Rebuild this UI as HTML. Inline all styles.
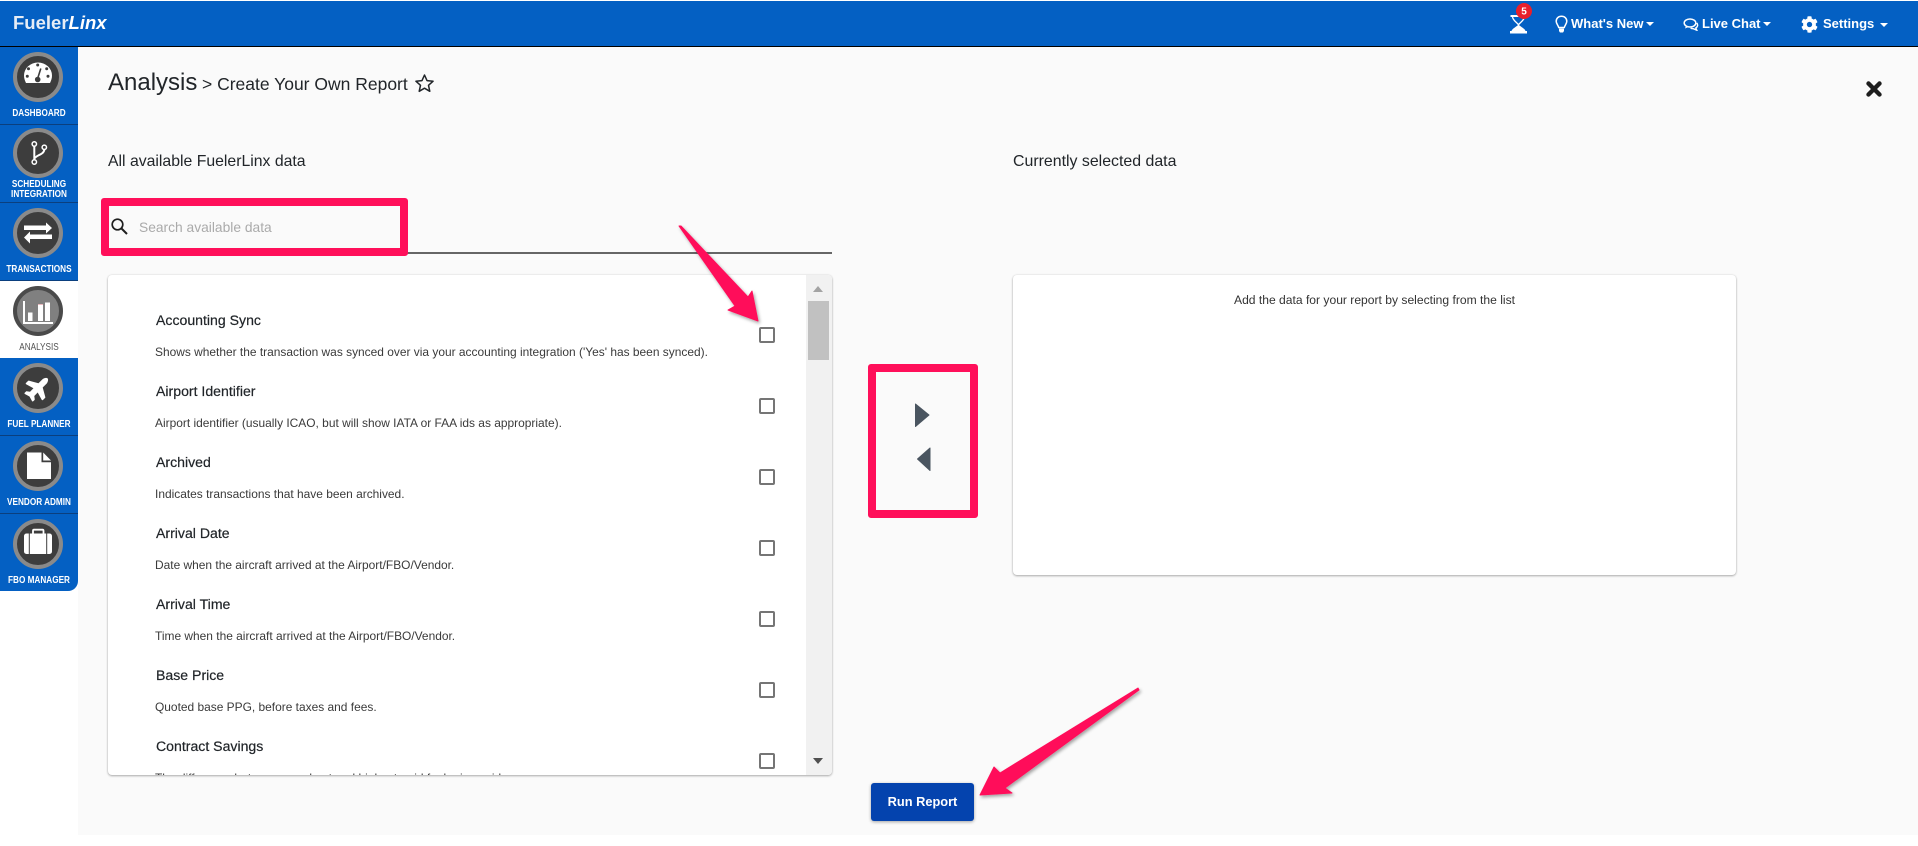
<!DOCTYPE html>
<html lang="en">
<head>
<meta charset="utf-8">
<title>Create Your Own Report</title>
<style>
html,body{margin:0;padding:0;width:1918px;height:846px;overflow:hidden;background:#fff;font-family:"Liberation Sans",Arial,sans-serif;color:#212529}
*{box-sizing:border-box}
.a{position:absolute;white-space:nowrap}
#hdr{position:absolute;left:0;top:1px;width:1918px;height:46px;background:#0460c3;border-bottom:1px solid #000}
#main{position:absolute;left:78px;top:47px;width:1840px;height:788px;background:#fafafa}
#side{position:absolute;left:0;top:47px;width:78px;height:544px;background:#0460c3;border-bottom-right-radius:10px;overflow:hidden}
.sep{position:absolute;left:0;width:78px;height:1px;background:#0b3f7e}
.ic{position:absolute;left:13px;width:50px;height:50px}
.lb{position:absolute;left:-11px;width:100px;text-align:center;font-size:10px;font-weight:bold;color:#fff;line-height:10px;transform:scaleX(.82);white-space:nowrap}
.nav{color:#fff;font-weight:bold;font-size:13px;line-height:16px;top:16px}
.card{position:absolute;background:#fff;border-radius:4px;box-shadow:0 1px 2px rgba(0,0,0,.3),0 0 2px rgba(0,0,0,.1)}
.h{position:absolute;left:48px;font-size:14.100px;line-height:20px;color:#212529;white-space:nowrap;-webkit-text-stroke:.2px #212529}
.d{position:absolute;left:47px;font-size:11.950px;line-height:16px;color:#3a3a3a;white-space:nowrap}
.c{position:absolute;left:651px;width:16px;height:16px;border:2px solid #757575;border-radius:2px;background:#fff}
.rb{position:absolute;border:8px solid #ff0f5a;border-radius:3px}
</style>
</head>
<body>
<div id="main"></div>

<!-- header -->
<div id="hdr"></div>
<div class="a" style="left:13px;top:12px;font-size:18.500px;line-height:22px;font-weight:bold;color:#e6edf6">Fueler<i style="color:#fff">Linx</i></div>

<svg class="a" style="left:1505px;top:2px" width="30" height="34" viewBox="0 0 30 34">
<path d="M5.500 13h16v2h-16z" fill="#fff"/>
<path d="M7.500 15C8 18.500 12 20.500 13.500 22.800 15 20.500 19 18.500 19.500 15" fill="none" stroke="#fff" stroke-width="1.300"/>
<path d="M13.500 22.500C15 24.500 20 26.500 20.500 29H22V31.500H5V29H6.500C7 26.500 12 24.500 13.500 22.500Z" fill="#fff"/>
<circle cx="19" cy="9" r="8" fill="#e81f2b"/>
<text x="19" y="12.500" text-anchor="middle" font-family="Liberation Sans" font-weight="bold" font-size="10" fill="#fff">5</text>
</svg>

<svg class="a" style="left:1555px;top:15px" width="13" height="18" viewBox="0 0 13 18">
<path d="M6.500 1.200C3.400 1.200 1.200 3.400 1.200 6.200c0 2.500 1.900 3.800 2.500 6.300h5.600c.6-2.500 2.500-3.800 2.500-6.300 0-2.800-2.200-5-5.300-5z" fill="none" stroke="#fff" stroke-width="1.500"/>
<path d="M4 13.500h5v2.500l-1 1.500H5L4 16z" fill="#fff"/>
</svg>
<div class="a nav" style="left:1571px">What's New</div>
<div class="a" style="left:1646px;top:22px;border:4px solid transparent;border-top:4.500px solid #fff;border-bottom:0"></div>

<svg class="a" style="left:1683px;top:17px" width="16" height="14" viewBox="0 0 16 14">
<ellipse cx="7" cy="6" rx="5.800" ry="4" fill="none" stroke="#fff" stroke-width="1.500"/>
<path d="M3 9l-1 2.500 3.500-1.500z" fill="#fff"/>
<path d="M13.800 6c1.500 1.800.8 4-1 5l1 2.200-3.500-1.500c-1 0-2-.2-2.700-.6" fill="none" stroke="#fff" stroke-width="1.400"/>
</svg>
<div class="a nav" style="left:1702px">Live Chat</div>
<div class="a" style="left:1763px;top:22px;border:4px solid transparent;border-top:4.500px solid #fff;border-bottom:0"></div>

<svg class="a" style="left:1801px;top:16px" width="17" height="17" viewBox="0 0 512 512"><path fill="#fff" d="M487.4 315.7l-42.6-24.6c4.3-23.2 4.3-47 0-70.2l42.6-24.6c4.900-2.800 7.100-8.600 5.500-14-11.100-35.600-30-67.800-54.700-94.600-3.800-4.100-10-5.100-14.800-2.300L380.800 110c-17.900-15.400-38.500-27.300-60.800-35.100V25.800c0-5.600-3.900-10.500-9.400-11.700-36.700-8.200-74.300-7.800-109.200 0-5.500 1.200-9.400 6.100-9.400 11.700V75c-22.200 7.900-42.800 19.800-60.800 35.100L88.700 85.500c-4.900-2.800-11-1.900-14.800 2.300-24.700 26.700-43.600 58.900-54.700 94.600-1.700 5.400.6 11.200 5.500 14L67.300 221c-4.300 23.200-4.300 47 0 70.200l-42.600 24.600c-4.900 2.800-7.100 8.600-5.500 14 11.100 35.600 30 67.800 54.700 94.600 3.800 4.100 10 5.100 14.800 2.300l42.600-24.600c17.900 15.400 38.500 27.300 60.800 35.100v49.200c0 5.600 3.900 10.500 9.400 11.700 36.700 8.200 74.300 7.800 109.200 0 5.500-1.200 9.400-6.100 9.400-11.700v-49.200c22.200-7.900 42.800-19.800 60.800-35.100l42.600 24.600c4.900 2.800 11 1.900 14.800-2.300 24.700-26.700 43.600-58.900 54.700-94.600 1.500-5.500-.7-11.300-5.600-14.100zM256 336c-44.100 0-80-35.900-80-80s35.900-80 80-80 80 35.900 80 80-35.900 80-80 80z"/></svg>
<div class="a nav" style="left:1823px">Settings</div>
<div class="a" style="left:1880px;top:23px;border:4px solid transparent;border-top:4.500px solid #fff;border-bottom:0"></div>

<!-- sidebar -->
<div id="side">
  <div style="position:absolute;left:0;top:234px;width:78px;height:77px;background:#fff"></div>
  <div class="sep" style="top:77px"></div>
  <div class="sep" style="top:155px"></div>
  <div class="sep" style="top:233px"></div>
  <div class="sep" style="top:388px"></div>
  <div class="sep" style="top:466px"></div>

  <svg class="ic" style="top:5px" viewBox="0 0 50 50"><circle cx="25" cy="25" r="23" fill="#3d3d3d" stroke="#8a8a8a" stroke-width="4"/>
    <path d="M13 31Q11 27 11 23.500A14 13 0 0 1 39 23.500Q39 27 37 31Z" fill="#fff"/>
    <g fill="#3d3d3d"><circle cx="24.700" cy="13" r="1.500"/><circle cx="15.500" cy="16.700" r="1.500"/><circle cx="33.700" cy="16.700" r="1.500"/><circle cx="14.300" cy="24.300" r="1.500"/><circle cx="35" cy="24.300" r="1.500"/><circle cx="24.700" cy="27.500" r="2.800"/></g>
    <path d="M24.500 27L27.800 16.500" stroke="#3d3d3d" stroke-width="1.600"/></svg>
  <div class="lb" style="top:62px">DASHBOARD</div>

  <svg class="ic" style="top:81px" viewBox="0 0 50 50"><circle cx="25" cy="25" r="23" fill="#3d3d3d" stroke="#8a8a8a" stroke-width="4"/>
    <g fill="none" stroke="#fff"><path d="M21.300 18.500V31.500" stroke-width="2"/><path d="M31.300 21.500c0 5-9 6-9.500 9" stroke-width="2"/><circle cx="21.300" cy="16" r="2.200" stroke-width="1.500"/><circle cx="31.300" cy="19.300" r="2.200" stroke-width="1.500"/><circle cx="21.300" cy="34" r="2.200" stroke-width="1.500"/></g></svg>
  <div class="lb" style="top:133px">SCHEDULING</div>
  <div class="lb" style="top:143px">INTEGRATION</div>

  <svg class="ic" style="top:161px" viewBox="0 0 50 50"><circle cx="25" cy="25" r="23" fill="#3d3d3d" stroke="#8a8a8a" stroke-width="4"/>
    <path d="M11 17.500H33V14.500L39 20 33 25.500V22H11ZM39 26.500H17V23.500L11 29.500 17 35.500V31H39Z" fill="#fff"/></svg>
  <div class="lb" style="top:218px">TRANSACTIONS</div>

  <svg class="ic" style="top:239px" viewBox="0 0 50 50"><circle cx="25" cy="25" r="23" fill="#808080" stroke="#4a4a4a" stroke-width="4"/>
    <path d="M10 15h2v21h28v2H10z" fill="#fff"/>
    <path d="M15 26.500h4.500V35H15zM25 18h5v17h-5zM32 16.500h5V35h-5z" fill="#fff"/><path d="M25 18h5v1h-5z" fill="#e9b8bd"/></svg>
  <div class="lb" style="top:296px;font-weight:normal;color:#555">ANALYSIS</div>

  <svg class="ic" style="top:316px" viewBox="0 0 50 50"><circle cx="25" cy="25" r="23" fill="#3d3d3d" stroke="#8a8a8a" stroke-width="4"/>
    <g transform="translate(25 25) rotate(-45) scale(.047) translate(-288 -256)"><path fill="#fff" d="M480 192H365.710L260.610 8.060A16.014 16.014 0 0 0 246.710 0h-65.500c-10.630 0-18.300 10.170-15.380 20.390L214.860 192H112l-43.200-57.600c-3.020-4.030-7.770-6.400-12.800-6.400H16.010C5.600 128-2.040 137.780.49 147.880L32 256 .49 364.120C-2.040 374.220 5.600 384 16.010 384H56c5.040 0 9.780-2.370 12.800-6.400L112 320h102.860l-49.030 171.600c-2.920 10.220 4.750 20.400 15.380 20.400h65.500c5.740 0 11.040-3.080 13.890-8.060L365.710 320H480c35.350 0 96-28.650 96-64s-60.650-64-96-64z"/></g></svg>
  <div class="lb" style="top:373px">FUEL PLANNER</div>

  <svg class="ic" style="top:394px" viewBox="0 0 50 50"><circle cx="25" cy="25" r="23" fill="#3d3d3d" stroke="#8a8a8a" stroke-width="4"/>
    <path d="M14 11.500H28.500V21.200H38V38H14Z" fill="#fff"/><path d="M30.200 11.500L38 19.500H30.200Z" fill="#fff"/></svg>
  <div class="lb" style="top:451px">VENDOR ADMIN</div>

  <svg class="ic" style="top:472px" viewBox="0 0 50 50"><circle cx="25" cy="25" r="23" fill="#3d3d3d" stroke="#8a8a8a" stroke-width="4"/>
    <rect x="11" y="14.500" width="28" height="20.500" rx="2.500" fill="#fff"/>
    <path d="M16.300 14.500V35M33.700 14.500V35" stroke="#3d3d3d" stroke-width="1"/>
    <path d="M20 14.500v-2.800a1 1 0 0 1 1-1h8.500a1 1 0 0 1 1 1v2.800" fill="none" stroke="#fff" stroke-width="1.800"/></svg>
  <div class="lb" style="top:529px">FBO MANAGER</div>
</div>

<!-- page title -->
<div class="a" style="left:108px;top:68px;font-size:24px;line-height:30px;color:#212529">Analysis</div>
<div class="a" style="left:202px;top:73px;font-size:17.500px;line-height:22px;color:#212529">&gt; Create Your Own Report</div>
<svg class="a" style="left:414px;top:73px" width="21" height="21" viewBox="0 0 21 21"><path d="M10.500 2l2.500 5.600 6.100.6-4.600 4.100 1.300 6-5.300-3.100-5.300 3.100 1.300-6L1.900 8.200 8 7.600z" fill="none" stroke="#212529" stroke-width="1.500" stroke-linejoin="round"/></svg>
<svg class="a" style="left:1866px;top:81px" width="16" height="16" viewBox="0 0 16 16"><path d="M2.500 2.500L13.500 13.500M13.500 2.500L2.500 13.500" stroke="#1d1d1d" stroke-width="4.400" stroke-linecap="round"/></svg>

<div class="a" style="left:108px;top:152px;font-size:15.800px;line-height:20px;color:#212529">All available FuelerLinx data</div>
<div class="a" style="left:1013px;top:152px;font-size:15.900px;line-height:20px;color:#212529">Currently selected data</div>

<!-- search -->
<div class="a" style="left:108px;top:252px;width:724px;height:1.500px;background:#666"></div>
<svg class="a" style="left:110px;top:217px" width="19" height="19" viewBox="0 0 19 19"><circle cx="7.500" cy="7.500" r="5.300" fill="none" stroke="#1f1f1f" stroke-width="1.700"/><path d="M11.500 11.500L17 17" stroke="#1f1f1f" stroke-width="2"/></svg>
<div class="a" style="left:139px;top:218px;font-size:13.800px;line-height:20px;color:#aaa">Search available data</div>

<!-- list card -->
<div class="card" style="left:108px;top:275px;width:724px;height:500px;overflow:hidden">
  <div class="h" style="top:35px">Accounting Sync</div><div class="d" style="top:69px">Shows whether the transaction was synced over via your accounting integration ('Yes' has been synced).</div><div class="c" style="top:52px"></div>
  <div class="h" style="top:106px">Airport Identifier</div><div class="d" style="top:140px">Airport identifier (usually ICAO, but will show IATA or FAA ids as appropriate).</div><div class="c" style="top:123px"></div>
  <div class="h" style="top:177px">Archived</div><div class="d" style="top:211px">Indicates transactions that have been archived.</div><div class="c" style="top:194px"></div>
  <div class="h" style="top:248px">Arrival Date</div><div class="d" style="top:282px">Date when the aircraft arrived at the Airport/FBO/Vendor.</div><div class="c" style="top:265px"></div>
  <div class="h" style="top:319px">Arrival Time</div><div class="d" style="top:353px">Time when the aircraft arrived at the Airport/FBO/Vendor.</div><div class="c" style="top:336px"></div>
  <div class="h" style="top:390px">Base Price</div><div class="d" style="top:424px">Quoted base PPG, before taxes and fees.</div><div class="c" style="top:407px"></div>
  <div class="h" style="top:461px">Contract Savings</div><div class="d" style="top:495px">The difference between your best and highest-paid fuel price paid.</div><div class="c" style="top:478px"></div>
  <div style="position:absolute;left:698px;top:0;width:26px;height:500px;background:#f1f1f1"></div>
  <div style="position:absolute;left:700px;top:26px;width:21px;height:59px;background:#c1c1c1"></div>
  <div style="position:absolute;left:705px;top:11px;border:5.500px solid transparent;border-bottom:6px solid #a3a3a3;border-top:0"></div>
  <div style="position:absolute;left:705px;top:483px;border:5.500px solid transparent;border-top:6px solid #505050;border-bottom:0"></div>
</div>

<!-- selected card -->
<div class="card" style="left:1013px;top:275px;width:723px;height:300px">
  <div class="a" style="left:221px;top:17px;font-size:12.100px;line-height:16px;color:#333">Add the data for your report by selecting from the list</div>
</div>

<!-- move arrows -->
<svg class="a" style="left:912px;top:400px" width="22" height="74" viewBox="0 0 22 74"><path d="M3.500 4L17 15 3.500 26.500Z" fill="#4a5560" stroke="#4a5560" stroke-linejoin="round"/><path d="M18 48L5.500 59 18 70.500Z" fill="#4a5560" stroke="#4a5560" stroke-linejoin="round"/></svg>

<!-- run report -->
<div class="a" style="left:871px;top:783px;width:103px;height:38px;background:#0443ae;border-radius:3px;box-shadow:0 1px 3px rgba(0,0,0,.35);color:#fff;font-weight:bold;font-size:12.800px;line-height:38px;text-align:center">Run Report</div>

<!-- annotations -->
<div class="rb" style="left:101px;top:198px;width:307px;height:58px"></div>
<div class="rb" style="left:868px;top:364px;width:110px;height:154px"></div>
<svg class="a" style="left:0;top:0;pointer-events:none;overflow:visible" width="1918" height="846">
<defs><filter id="s" x="-20%" y="-20%" width="140%" height="140%"><feDropShadow dx="1.500" dy="2" stdDeviation="1.500" flood-color="#000" flood-opacity=".35"/></filter></defs>
<path filter="url(#s)" d="M679 226L681 226 748 297 752 291 758 321 728 310 735 306Z" fill="#ff0f5a" stroke="#ff0f5a" stroke-linejoin="round"/>
<path filter="url(#s)" d="M1138 688L1139 690 1005 788 1012 793 980 795 994 767 1000 773Z" fill="#ff0f5a" stroke="#ff0f5a" stroke-linejoin="round"/>
</svg>
</body>
</html>
